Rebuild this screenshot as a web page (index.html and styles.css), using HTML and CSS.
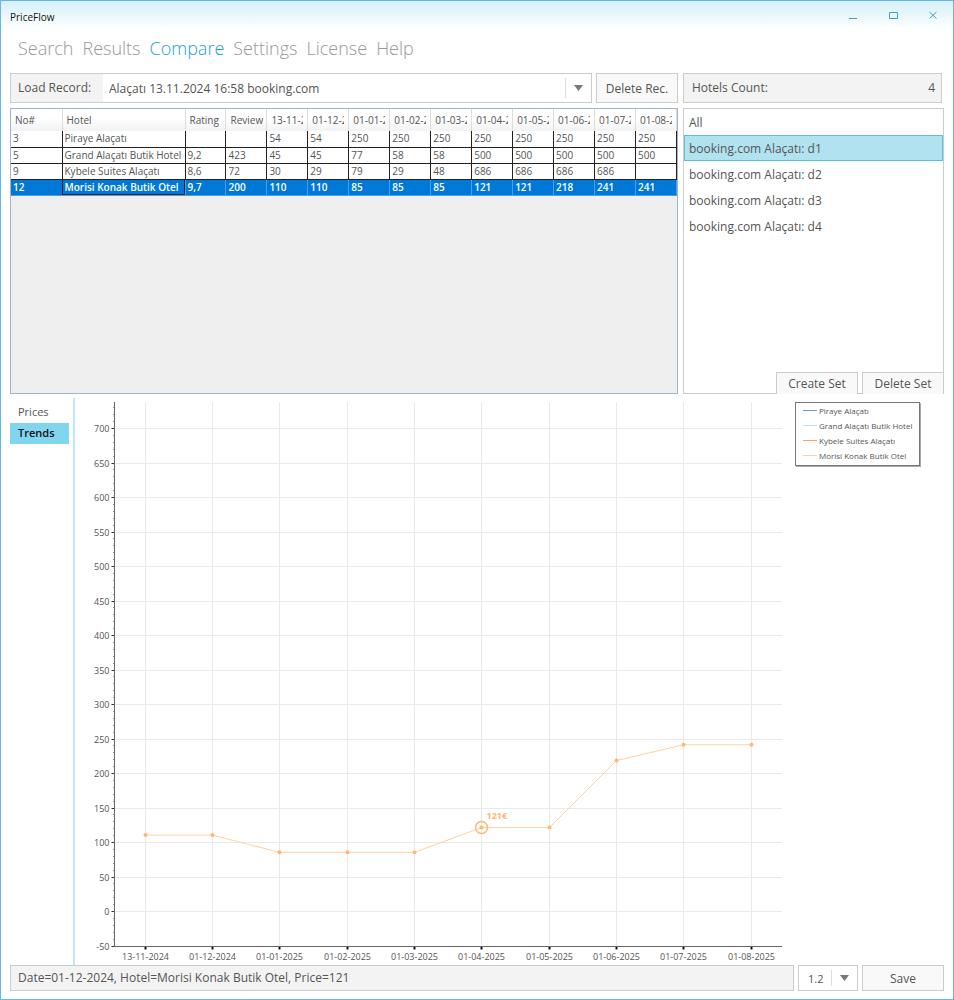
FILE: index.html
```html
<!DOCTYPE html>
<html lang="en">
<head>
    <meta charset="UTF-8">
    <meta name="viewport" content="width=device-width, initial-scale=1">
    <title>PriceFlow</title>
    <link rel="stylesheet" href="styles.css">
</head>
<body>
    <div class="window">
        <header class="title-bar">
            <span class="title">PriceFlow</span>
            <div class="window-buttons">
                <button type="button" aria-label="Minimize"><svg width="10" height="10"><path d="M1 8.5h8" /></svg></button>
                <button type="button" aria-label="Maximize"><svg width="10" height="10"><path d="M1.5 2.5h8v6h-8z" /></svg></button>
                <button type="button" aria-label="Close"><svg width="10" height="10"><path d="M1.5 2l7 6.500M8.500 2l-7 6.500" /></svg></button>
            </div>
        </header>

        <nav class="main-nav">
            <a href="#search">Search</a>
            <a href="#results">Results</a>
            <a href="#compare" class="active">Compare</a>
            <a href="#settings">Settings</a>
            <a href="#license">License</a>
            <a href="#help">Help</a>
        </nav>

        <main class="content">
            <div class="top-grid">
                <div class="record-row">
                    <div class="record-box">
                        <label for="record">Load Record:</label>
                        <div class="combo">
                            <select id="record">
                                <option>Alaçatı 13.11.2024 16:58 booking.com</option>
                            </select>
                            <svg class="arrow" width="9" height="6"><path d="M0 0h9l-4.500 6z" /></svg>
                        </div>
                    </div>
                    <button type="button" class="btn btn-record">Delete Rec.</button>
                </div>
                <div class="count-box">
                    <span>Hotels Count:</span>
                    <span>4</span>
                </div>

                <div class="grid-view">
                    <table>
                        <colgroup>
                            <col class="col-no">
                            <col class="col-hotel">
                            <col span="12">
                        </colgroup>
                        <thead>
                            <tr>
                                <th>No#</th>
                                <th>Hotel</th>
                                <th>Rating</th>
                                <th>Review</th>
                                <th><span>13-11-2024</span></th>
                                <th><span>01-12-2024</span></th>
                                <th><span>01-01-2025</span></th>
                                <th><span>01-02-2025</span></th>
                                <th><span>01-03-2025</span></th>
                                <th><span>01-04-2025</span></th>
                                <th><span>01-05-2025</span></th>
                                <th><span>01-06-2025</span></th>
                                <th><span>01-07-2025</span></th>
                                <th><span>01-08-2025</span></th>
                            </tr>
                        </thead>
                        <tbody>
                            <tr><td>3</td><td>Piraye Alaçatı</td><td></td><td></td><td>54</td><td>54</td><td>250</td><td>250</td><td>250</td><td>250</td><td>250</td><td>250</td><td>250</td><td>250</td></tr>
                            <tr><td>5</td><td>Grand Alaçatı Butik Hotel</td><td>9,2</td><td>423</td><td>45</td><td>45</td><td>77</td><td>58</td><td>58</td><td>500</td><td>500</td><td>500</td><td>500</td><td>500</td></tr>
                            <tr><td>9</td><td>Kybele Suites Alaçatı</td><td>8,6</td><td>72</td><td>30</td><td>29</td><td>79</td><td>29</td><td>48</td><td>686</td><td>686</td><td>686</td><td>686</td><td></td></tr>
                            <tr class="selected"><td>12</td><td class="focused">Morisi Konak Butik Otel</td><td>9,7</td><td>200</td><td>110</td><td>110</td><td>85</td><td>85</td><td>85</td><td>121</td><td>121</td><td>218</td><td>241</td><td>241</td></tr>
                        </tbody>
                    </table>
                </div>

                <div class="sets">
                    <ul class="set-list">
                        <li><button type="button">All</button></li>
                        <li><button type="button" class="current">booking.com Alaçatı: d1</button></li>
                        <li><button type="button">booking.com Alaçatı: d2</button></li>
                        <li><button type="button">booking.com Alaçatı: d3</button></li>
                        <li><button type="button">booking.com Alaçatı: d4</button></li>
                    </ul>
                    <div class="set-buttons">
                        <button type="button" class="btn">Create Set</button>
                        <button type="button" class="btn">Delete Set</button>
                    </div>
                </div>
            </div>

            <div class="chart-area">
                <div class="chart-tabs">
                    <button type="button">Prices</button>
                    <button type="button" class="active">Trends</button>
                </div>
                <svg id="chart" class="chart" viewBox="0 0 707 566" role="img" aria-label="Price trends"></svg>
                <ul class="legend">
                    <li><i class="line piraye"></i>Piraye Alaçatı</li>
                    <li><i class="line grand"></i>Grand Alaçatı Butik Hotel</li>
                    <li><i class="line kybele"></i>Kybele Suites Alaçatı</li>
                    <li><i class="line morisi"></i>Morisi Konak Butik Otel</li>
                </ul>
            </div>

            <footer class="status-row">
                <div class="status">Date=01-12-2024, Hotel=Morisi Konak Butik Otel, Price=121</div>
                <div class="combo zoom">
                    <select aria-label="Scale">
                        <option>1.2</option>
                    </select>
                    <svg class="arrow" width="9" height="6"><path d="M0 0h9l-4.500 6z" /></svg>
                </div>
                <button type="button" class="btn btn-save">Save</button>
            </footer>
        </main>
    </div>

    <script src="chart.js"></script>
</body>
</html>
```

FILE: styles.css
```css
* {
    box-sizing: border-box;
}
body {
    margin: 0;
    font-family: "Open Sans", "Noto Sans", sans-serif;
    font-size: 12px;
    color: #555;
    background: #fff;
}
button, select {
    font: inherit;
    color: inherit;
    margin: 0;
    border-radius: 0;
    cursor: pointer;
}
ul {
    list-style: none;
    margin: 0;
    padding: 0;
}
.window {
    display: flex;
    flex-direction: column;
    min-height: 100vh;
    border: 1px solid #67b7e1;
}

/* title bar */
.title-bar {
    display: flex;
    justify-content: space-between;
    height: 32px;
    padding: 0 0 0 9px;
    background: linear-gradient(#d5f0f8, #fff 90%);
}
.title {
    line-height: 32px;
    font-size: 10px;
    color: #111;
}
.window-buttons {
    display: flex;
}
.window-buttons button {
    width: 40px;
    padding: 0 0 4px;
    border: none;
    background: none;
}
.window-buttons svg {
    fill: none;
    stroke: #3c9fc9;
}

/* navigation */
.main-nav {
    display: flex;
    gap: 9px;
    height: 40px;
    padding: 0 17px;
    line-height: 30px;
    font-size: 18px;
    font-weight: 300;
}
.main-nav a {
    color: #999;
    text-decoration: none;
}
.main-nav .active {
    color: #1ba1da;
}

.content {
    flex: 1;
    display: flex;
    flex-direction: column;
    padding: 0 9px 8px;
}
.top-grid {
    display: grid;
    grid-template-columns: 1fr 261px;
    grid-template-rows: 30px 286px;
    gap: 5px;
}
.btn {
    border: 1px solid #ccc;
    background: #f9f9f9;
    padding: 0;
}
.record-row {
    display: flex;
    gap: 4px;
}
.record-box {
    flex: 1;
    display: flex;
    border: 1px solid #ccc;
}
.record-box label {
    width: 92px;
    padding-left: 7px;
    line-height: 28px;
    background: #f3f3f3;
}
.btn-record {
    width: 82px;
}
.combo {
    position: relative;
    flex: 1;
    display: flex;
}
.combo select {
    flex: 1;
    width: 100%;
    padding: 0 30px 0 6px;
    border: none;
    background: #fff;
    appearance: none;
}
.combo::after {
    content: "";
    position: absolute;
    top: 4px;
    bottom: 4px;
    right: 25px;
    border-left: 1px solid #ddd;
}
.arrow {
    position: absolute;
    top: 50%;
    right: 8px;
    margin-top: -3px;
    fill: #777;
    pointer-events: none;
}
.count-box {
    display: flex;
    justify-content: space-between;
    margin-right: 2px;
    padding: 0 6px 0 8px;
    border: 1px solid #ccc;
    background: #f3f3f3;
    line-height: 28px;
}

/* hotels table */
.grid-view {
    border: 1px solid #a3b5cb;
    background: #efefef;
    overflow: hidden;
}
table {
    width: 100%;
    table-layout: fixed;
    border-collapse: collapse;
    background: #fff;
    font-size: 10px;
}
.col-no {
    width: 51px;
}
.col-hotel {
    width: 123px;
}
th, td {
    padding: 0 2px;
    text-align: left;
    white-space: nowrap;
    overflow: hidden;
}
th {
    height: 22px;
    padding: 0 4px;
    border-right: 1px solid #ddd;
    background: linear-gradient(#fff 40%, #f1f2f4);
    font-weight: 400;
}
th span {
    display: block;
    overflow: hidden;
}
td {
    height: 16px;
    line-height: 15px;
    border-right: 1px solid #222;
    border-bottom: 1px solid #222;
}
.selected td {
    background: #0078d7;
    color: #fff;
    font-weight: 600;
    border-color: #4a9fe2;
}
.selected .focused {
    outline: 1px solid #222;
    outline-offset: -1px;
}

/* sets */
.sets {
    display: flex;
    flex-direction: column;
    justify-content: space-between;
    border: 1px solid #ccc;
}
.set-list button {
    display: block;
    width: 100%;
    height: 26px;
    padding: 0 4px;
    border: 1px solid transparent;
    background: none;
    text-align: left;
}
.set-list .current {
    border-color: #5bbede;
    background: #b1e2f0;
}
.set-buttons {
    display: flex;
    justify-content: flex-end;
    gap: 4px;
    margin: 0 -1px -1px 0;
}
.set-buttons .btn {
    width: 82px;
    height: 22px;
    border-bottom: none;
}

/* chart */
.chart-area {
    flex: 1;
    display: flex;
    align-items: flex-start;
    padding-top: 4px;
}
.chart-tabs {
    align-self: stretch;
    width: 65px;
    padding: 4px 4px 0 0;
    border-right: 2px solid #c3e8f5;
}
.chart-tabs button {
    display: block;
    width: 100%;
    height: 21px;
    padding: 0 8px 2px;
    border: none;
    background: none;
    font-size: 11px;
    text-align: left;
}
.chart-tabs .active {
    background: #80d6ee;
    color: #111;
    font-weight: 600;
}
.chart {
    flex: 1;
    min-width: 0;
}
.chart text {
    font-size: 9px;
    fill: #555;
}
.chart .grid {
    stroke: #e9e9e9;
}
.chart .axis {
    fill: none;
    stroke: #666;
}
.chart .tick {
    stroke: #333;
}
.chart .date-tick {
    stroke: #111;
    stroke-width: 2;
}
.chart .series {
    fill: none;
    stroke: #ffd2a4;
}
.chart .point {
    fill: #ffb870;
}
.chart .ring {
    fill: none;
    stroke: #ffb870;
    stroke-width: 1.5;
}
.chart .value {
    fill: #ffb870;
    font-weight: 700;
}
.legend {
    width: 125px;
    margin: 4px 24px 0 13px;
    padding: 0 0 2px 7px;
    border: 1px solid #777;
    box-shadow: 1px 1px 0 #aaa;
    font-size: 8px;
    line-height: 15px;
    white-space: nowrap;
}
.legend li {
    display: flex;
    align-items: center;
    gap: 2px;
}
.line {
    width: 14px;
    height: 1px;
}
.piraye {
    background: #6f9cc6;
}
.grand {
    background: #c3d8f1;
}
.kybele {
    background: #f9a469;
}
.morisi {
    background: #ffd2a4;
}

/* status bar */
.status-row {
    display: flex;
    gap: 4px;
    height: 26px;
}
.status {
    flex: 1;
    padding-left: 7px;
    border: 1px solid #ccc;
    background: #f3f3f3;
    line-height: 24px;
}
.zoom {
    flex: none;
    width: 60px;
    border: 1px solid #ccc;
    font-size: 11px;
}
.zoom select {
    padding-left: 9px;
}
.btn-save {
    width: 82px;
}
```

FILE: chart.js
```js
const dates = ['13-11-2024', '01-12-2024', '01-01-2025', '01-02-2025', '01-03-2025',
    '01-04-2025', '01-05-2025', '01-06-2025', '01-07-2025', '01-08-2025'];
const prices = [110, 110, 85, 85, 85, 121, 121, 218, 241, 241];
const selected = 5;

const chart = document.getElementById('chart');
const left = 39.5;
const right = 707;
const top0 = 4;
const bottom = 548.5;

function add(name, attrs, text) {
    const el = document.createElementNS('http://www.w3.org/2000/svg', name);
    for (const key in attrs) el.setAttribute(key, attrs[key]);
    if (text) el.textContent = text;
    chart.appendChild(el);
}

function xPos(i) {
    return Math.round(69.5 + i * 67.35) + 0.5;
}

function yPos(price) {
    return 513 - price * 0.69;
}

// horizontal grid and price labels
for (let p = -50; p <= 700; p += 50) {
    const y = Math.round(yPos(p)) + 0.5;
    if (p > -50) add('line', { class: 'grid', x1: left, x2: right, y1: y, y2: y });
    add('line', { class: 'tick', x1: left - 3, x2: left, y1: y, y2: y });
    add('text', { x: left - 5, y: y + 3, 'text-anchor': 'end' }, String(p));
}

// minor ticks
for (let p = -50; p <= 730; p += 10) {
    const y = Math.round(yPos(p)) + 0.5;
    add('line', { class: 'tick', x1: left - 1, x2: left, y1: y, y2: y });
}

// vertical grid and dates
dates.forEach((date, i) => {
    const x = xPos(i);
    add('line', { class: 'grid', x1: x, x2: x, y1: top0, y2: bottom });
    add('line', { class: 'date-tick', x1: x, x2: x, y1: bottom, y2: bottom + 3 });
    add('text', { x: x, y: 562, 'text-anchor': 'middle' }, date);
});

add('path', { class: 'axis', d: `M${left} ${top0}V${bottom}H${right}` });

// price line
add('polyline', { class: 'series', points: prices.map((p, i) => xPos(i) + ',' + yPos(p)).join(' ') });
prices.forEach((p, i) => {
    add('circle', { class: 'point', cx: xPos(i), cy: yPos(p), r: 2 });
});

add('circle', { class: 'ring', cx: xPos(selected), cy: yPos(prices[selected]), r: 6 });
add('text', { class: 'value', x: xPos(selected) + 5, y: yPos(prices[selected]) - 9 }, prices[selected] + '€');
```
